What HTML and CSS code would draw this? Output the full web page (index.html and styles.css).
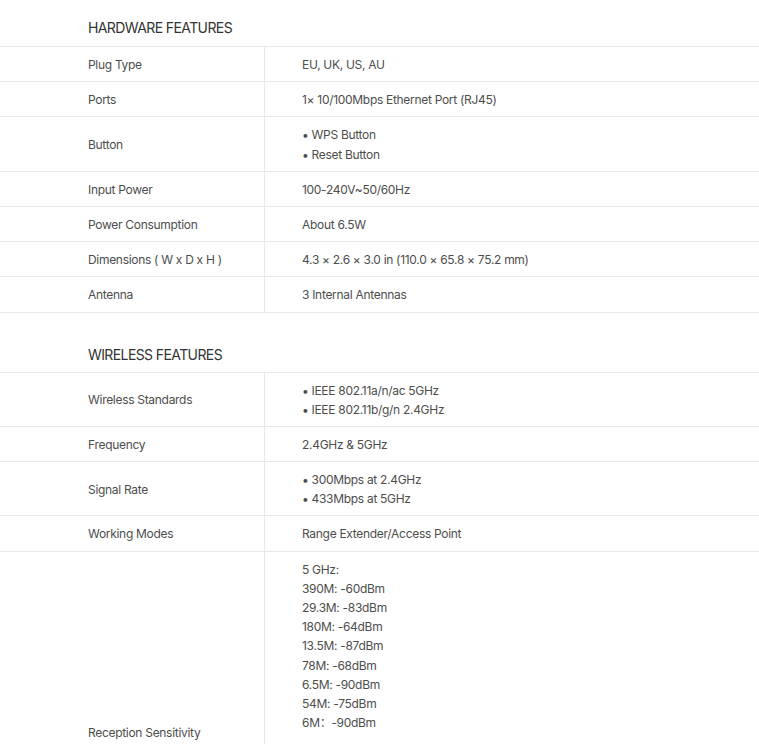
FILE: index.html
```html
<!DOCTYPE html>
<html lang="en">
<head>
    <meta charset="utf-8" />
    <title>Specifications</title>
    <meta name="viewport" content="width=device-width, initial-scale=1" />
<link rel="stylesheet" href="styles.css">
</head>
<body>

<div class="spec-group">
  <h3 class="spec-title">HARDWARE FEATURES</h3>
  <table class="spec-table">
    <tr><th>Plug Type</th><td>EU, UK, US, AU</td></tr>
    <tr><th>Ports</th><td>1× 10/100Mbps Ethernet Port (RJ45)</td></tr>
    <tr>
      <th>Button</th>
      <td>
        <ul class="dots">
          <li>WPS Button</li>
          <li>Reset Button</li>
        </ul>
      </td>
    </tr>
    <tr><th>Input Power</th><td>100-240V~50/60Hz</td></tr>
    <tr><th>Power Consumption</th><td>About 6.5W</td></tr>
    <tr><th>Dimensions ( W x D x H )</th><td>4.3 × 2.6 × 3.0 in (110.0 × 65.8 × 75.2 mm)</td></tr>
    <tr><th>Antenna</th><td>3 Internal Antennas</td></tr>
  </table>
</div>

<div class="spec-group">
  <h3 class="spec-title">WIRELESS FEATURES</h3>
  <table class="spec-table">
    <tr>
      <th>Wireless Standards</th>
      <td>
        <ul class="dots">
          <li>IEEE 802.11a/n/ac 5GHz</li>
          <li>IEEE 802.11b/g/n 2.4GHz</li>
        </ul>
      </td>
    </tr>
    <tr><th>Frequency</th><td>2.4GHz &amp; 5GHz</td></tr>
    <tr>
      <th>Signal Rate</th>
      <td>
        <ul class="dots">
          <li>300Mbps at 2.4GHz</li>
          <li>433Mbps at 5GHz</li>
        </ul>
      </td>
    </tr>
    <tr><th>Working Modes</th><td>Range Extender/Access Point</td></tr>
    <tr>
      <th>Reception Sensitivity</th>
      <td>
        5 GHz:<br />
        390M: -60dBm<br />
        29.3M: -83dBm<br />
        180M: -64dBm<br />
        13.5M: -87dBm<br />
        78M: -68dBm<br />
        6.5M: -90dBm<br />
        54M: -75dBm<br />
        6M：-90dBm<br />
        <br />
        2.4 GHz:<br />
        300M: -66dBm<br />
        144M: -68dBm<br />
        13M: -87dBm<br />
        54M: -77dBm<br />
        6.5M: -90dBm<br />
        11M: -90dBm<br />
        1M: -96dBm
      </td>
    </tr>
  </table>
</div>

</body>
</html>
```

FILE: styles.css
```css
html, body {
    background-color: #fff;
    color: #4d4d4d;
}

body {
    margin: 0;
    font-family: "Inter", "Noto Sans", "Noto Sans CJK SC", sans-serif;
    font-size: 12px;
    line-height: 1.6;
    letter-spacing: -0.3px;
}

.spec-group + .spec-group {
    margin-top: 14px;
}

.spec-title {
    margin: 0;
    padding: 18px 0 8px 88px;
    font-size: 14px;
    font-weight: 400;
    line-height: 20px;
    letter-spacing: -0.6px;
    color: #333;
}

.spec-group + .spec-group .spec-title {
    padding-bottom: 7px;
}

.spec-table {
    width: 100%;
    border-collapse: collapse;
    border-top: 1px solid #e8e8ec;
}

.spec-table tr {
    border-bottom: 1px solid #e8e8ec;
}

.spec-table th,
.spec-table td {
    padding: 8px 0 7px;
    text-align: left;
    vertical-align: middle;
    font-weight: 400;
}

.spec-table th {
    width: 176px;
    padding-left: 88px;
    border-right: 1px solid #e8e8ec;
}

.spec-table td {
    padding-left: 37px;
}

.dots {
    margin: 0;
    padding: 0;
    list-style: none;
}

.dots li::before {
    content: "• ";
}
```
